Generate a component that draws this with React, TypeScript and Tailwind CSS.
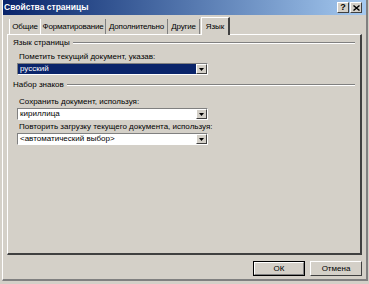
import React from 'react'

const TABS = [
  { label: 'Общие', w: 'w-[32px]' },
  { label: 'Форматирование', w: 'w-[65px]' },
  { label: 'Дополнительно', w: 'w-[62px]' },
  { label: 'Другие', w: 'w-[32px]' },
]

const txt = 'text-[8px] leading-none text-black'

function Combo({ value, selected }: { value: string; selected?: boolean }) {
  return (
    <div className="ml-[9px] w-[191px] h-[12px] flex border-t border-l border-[#808080] border-b border-r border-b-white border-r-white bg-white">
      <div className={`flex-1 flex items-center pl-[2px] text-[8px] leading-none ${selected ? 'bg-[#0a246a] text-white' : 'text-black'}`}>
        {value}
      </div>
      <div className="w-[11px] h-full bg-[#d4d0c8] border-t border-l border-white border-r border-b border-r-[#404040] border-b-[#404040] flex items-center justify-center">
        <svg width="5" height="3" viewBox="0 0 5 3"><path d="M0 0h5L2.5 3z" fill="#000" /></svg>
      </div>
    </div>
  )
}

function GroupTitle({ label }: { label: string }) {
  return (
    <div className="flex items-center gap-[3px] pl-[5px] pr-[5px]">
      <span className={txt}>{label}</span>
      <div className="flex-1 flex flex-col">
        <div className="h-px bg-[#808080]" />
        <div className="h-px bg-white" />
      </div>
    </div>
  )
}

export default function App() {
  return (
    <div className="w-[369px] h-[284px] overflow-hidden bg-[#d4d0c8] font-['Liberation_Sans',Arial,sans-serif]">
      <div className="h-[281px] ml-[2px] mr-[1px] border-r-2 border-b-2 border-[#808080] border-l border-l-white">
        {/* title bar */}
        <div className="h-[15px] flex items-center pl-[1px] pr-[4px] bg-gradient-to-r from-[#0a246a] to-[#a6caf0]">
          <span className="flex-1 text-white font-bold text-[8.5px] leading-none">Свойства страницы</span>
          <div className="flex gap-[1px]">
            <div className="w-[12px] h-[11px] bg-[#d4d0c8] border border-t-white border-l-white border-r-[#404040] border-b-[#404040] flex items-center justify-center text-[9px] font-bold leading-none">?</div>
            <div className="w-[12px] h-[11px] bg-[#d4d0c8] border border-t-white border-l-white border-r-[#404040] border-b-[#404040] flex items-center justify-center">
              <svg width="7" height="6" viewBox="0 0 7 6"><path d="M0.5 0.5l6 5M6.5 0.5l-6 5" stroke="#000" strokeWidth="1.4" /></svg>
            </div>
          </div>
        </div>

        {/* tabs */}
        <div className="h-[18px] mt-[1px] pl-[6px] flex items-end">
          {TABS.map((t, i) => (
            <div key={t.label} className={`${t.w} h-[15px] flex items-center justify-center tracking-[-0.2px] whitespace-nowrap ${txt} ${i === 0 ? 'border-l border-white' : ''} border-r border-[#808080]`}>
              {t.label}
            </div>
          ))}
          <div className="w-[29px] ml-[1px] h-[18px] -mb-px relative z-10 flex items-center justify-center bg-[#d4d0c8] border-t border-l border-white border-r-2 border-r-[#404040] text-[8px] leading-none text-black">
            Язык
          </div>
        </div>

        {/* panel */}
        <div className="ml-[4px] w-[355px] h-[221px] border-t border-l border-white border-r-2 border-b-2 border-r-[#404040] border-b-[#404040] pt-[4px]">
          <GroupTitle label="Язык страницы" />
          <div className={`pl-[11px] mt-[6px] ${txt}`}>Пометить текущий документ, указав:</div>
          <div className="mt-[2px]"><Combo value="русский" selected /></div>

          <div className="mt-[6px]"><GroupTitle label="Набор знаков" /></div>
          <div className={`pl-[11px] mt-[9px] ${txt}`}>Сохранить документ, используя:</div>
          <div className="mt-[2px]"><Combo value="кириллица" /></div>
          <div className={`pl-[11px] mt-[3px] ${txt}`}>Повторить загрузку текущего документа, используя:</div>
          <div className="mt-[2px]"><Combo value="<автоматический выбор>" /></div>
        </div>

        {/* buttons */}
        <div className="flex justify-end gap-[5px] pr-[4px] mt-[6px]">
          <button className="w-[52px] h-[15px] border border-black bg-[#d4d0c8] flex items-center justify-center text-[8px] leading-none text-black">
            <span className="w-full h-full flex items-center justify-center border border-t-white border-l-white border-r-[#808080] border-b-[#808080]">ОК</span>
          </button>
          <button className="w-[52px] h-[15px] bg-[#d4d0c8] border border-t-white border-l-white border-r-[#404040] border-b-[#404040] flex items-center justify-center text-[8px] leading-none text-black">
            Отмена
          </button>
        </div>
      </div>
    </div>
  )
}
